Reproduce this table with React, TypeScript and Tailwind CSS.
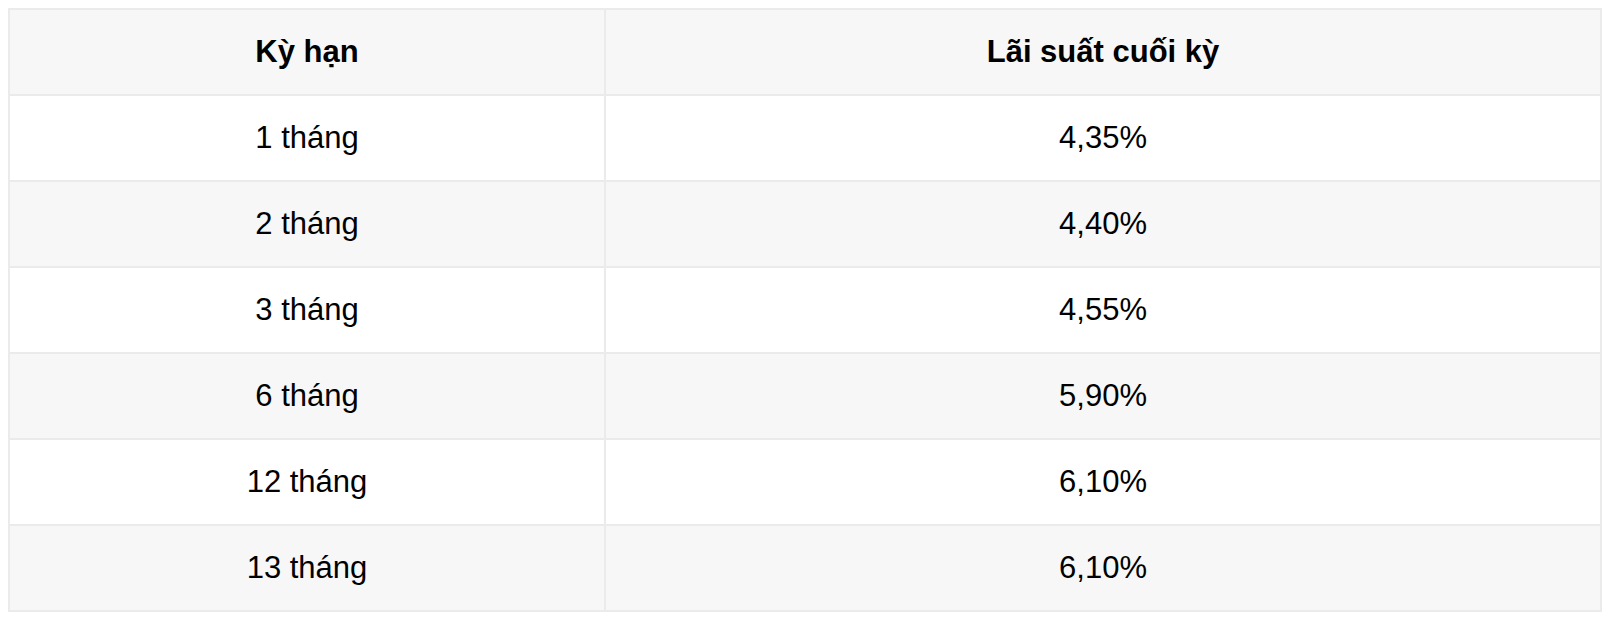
const rows = [
  { term: '1 tháng', rate: '4,35%' },
  { term: '2 tháng', rate: '4,40%' },
  { term: '3 tháng', rate: '4,55%' },
  { term: '6 tháng', rate: '5,90%' },
  { term: '12 tháng', rate: '6,10%' },
  { term: '13 tháng', rate: '6,10%' },
];

export default function App() {
  return (
    <div className="bg-white p-2 font-['Liberation_Sans',Arial,sans-serif] text-[31px] text-black">
      <table className="w-[1594px] border-collapse border-2 border-[#ebebeb]">
        <thead>
          <tr className="h-[86px] bg-[#f7f7f7]">
            <th className="w-[596px] border-2 border-[#ebebeb] font-bold">Kỳ hạn</th>
            <th className="border-2 border-[#ebebeb] font-bold">Lãi suất cuối kỳ</th>
          </tr>
        </thead>
        <tbody>
          {rows.map((r, i) => (
            <tr key={r.term} className={i % 2 === 1 ? 'h-[86px] bg-[#f7f7f7]' : 'h-[86px] bg-white'}>
              <td className="border-2 border-[#ebebeb] text-center">{r.term}</td>
              <td className="border-2 border-[#ebebeb] text-center">{r.rate}</td>
            </tr>
          ))}
        </tbody>
      </table>
    </div>
  );
}
